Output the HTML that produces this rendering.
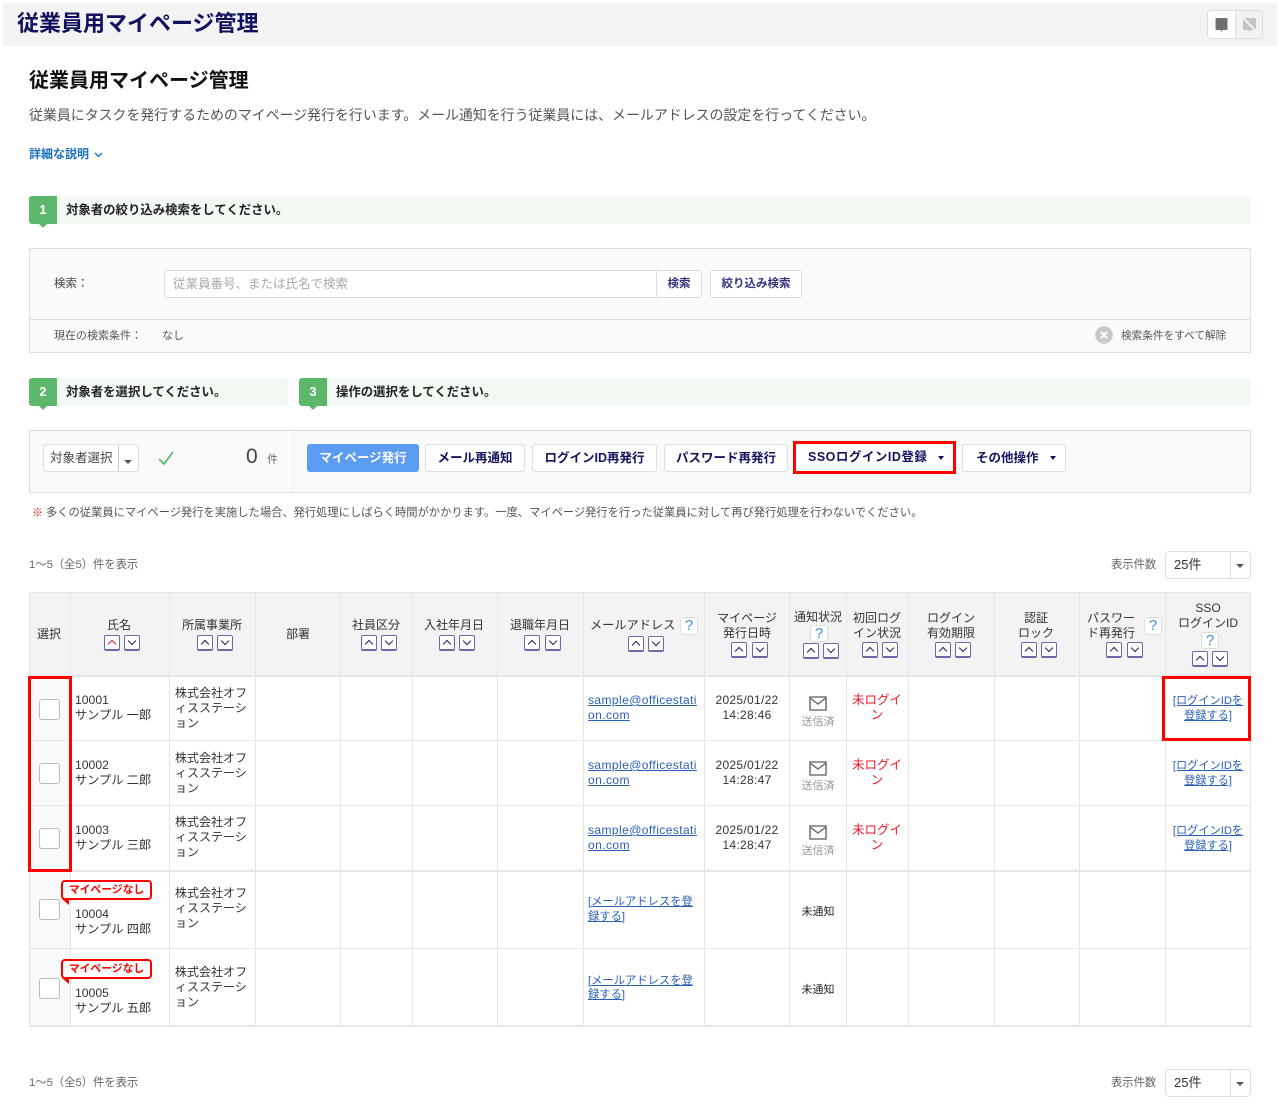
<!DOCTYPE html>
<html lang="ja"><head><meta charset="utf-8"><title>従業員用マイページ管理</title>
<style>
html,body{margin:0;padding:0;background:#fff}
body{position:relative;width:1280px;height:1118px;overflow:hidden;font-family:"Liberation Sans","Noto Sans CJK JP",sans-serif;color:#333;font-size:12px;filter:blur(.3px)}
.t{position:absolute;white-space:nowrap;line-height:16px;height:16px}
.c{transform:translateX(-50%)}
.b{position:absolute;box-sizing:border-box}
.btn{position:absolute;box-sizing:border-box;height:28px;top:444px;background:#fff;border:1px solid #ddd;border-radius:3px;color:#14145f;font-weight:bold;font-size:12.5px;line-height:27px;text-align:center;white-space:nowrap}
.s{position:absolute;box-sizing:border-box;width:16px;height:16px;border:1px solid #6a6aa8;border-bottom-width:2px;border-radius:2px;background:#fff}
.s:after{content:"";position:absolute;left:3.5px;width:6px;height:6px;box-sizing:border-box;border:solid #1d1d6b;border-width:1.5px 0 0 1.5px;transform:rotate(45deg);top:4.5px}
.d:after{transform:rotate(225deg);top:1.5px}
.r:after{border-color:#e8182c}
.q{position:absolute;box-sizing:border-box;width:18px;height:18px;background:#fff;border:1px solid #ddd;border-radius:3px;color:#3c8fe8;font-size:15px;line-height:16px;text-align:center}
.h{font-size:12px;color:#333}
.v{position:absolute;width:1px;top:592px;height:434px;background:#e6e6e6}
.l{position:absolute;left:29px;width:1222px;height:1px;background:#e6e6e6}
.cb{position:absolute;box-sizing:border-box;left:39px;width:21px;height:21px;background:#fff;border:1px solid #bbb;border-radius:3px}
a{color:#2b5fb8;text-decoration:underline;font-size:11.2px}
a.e{font-size:12px;letter-spacing:.42px}
a.m{font-size:11.3px}
.dt{letter-spacing:.3px}
.n{font-size:12.2px}
.red{color:#f01828;font-size:12.5px}
.tag{position:absolute;box-sizing:border-box;left:61px;width:91px;height:20px;border:2px solid #f00;border-radius:4px;background:#fff;color:#f00;font-size:10.8px;font-weight:bold;line-height:17px;text-align:center;white-space:nowrap}
.tail{position:absolute;left:62px;width:0;height:0;border-top:6px solid #f00;border-left:7px solid transparent}
.step{position:absolute;height:28px;background:#f3f9f3;border-radius:3px}
.badge{position:absolute;box-sizing:border-box;width:28px;height:28px;background:#5cb76b;border-radius:3px 0 0 3px;color:#fff;font-weight:bold;font-size:13px;line-height:28px;text-align:center}
.badge:after{content:"";position:absolute;left:10px;top:28px;border-top:4px solid #5cb76b;border-left:4px solid transparent;border-right:4px solid transparent}
.st{font-weight:bold;font-size:12.4px;color:#222}
.sel{position:absolute;box-sizing:border-box;background:#fff;border:1px solid #ddd;border-radius:4px}
.car{position:absolute;border-top:4px solid #555;border-left:4px solid transparent;border-right:4px solid transparent}
.sm{font-size:11.3px;color:#666}
</style></head><body>

<div class="b" style="left:3px;top:3px;width:1274px;height:43px;background:#f3f3f3"></div>
<div class="t" style="left:17px;top:12px;height:24px;line-height:24px;font-size:22px;font-weight:bold;color:#10105f">従業員用マイページ管理</div>
<div class="b" style="left:1207px;top:10px;width:56px;height:29px;background:#fff;border:1px solid #ddd;border-radius:4px"></div>
<div class="b" style="left:1235px;top:11px;width:27px;height:27px;background:#f3f3f3;border-left:1px solid #ddd;border-radius:0 3px 3px 0"></div>
<svg class="b" style="left:1214px;top:17px" width="15" height="16" viewBox="0 0 15 16"><path d="M2.5 1h10a1 1 0 0 1 1 1v10a1 1 0 0 1-1 1H8.500L7.500 15 6.500 13h-4a1 1 0 0 1-1-1V2a1 1 0 0 1 1-1z" fill="#6f6f6f"/></svg>
<svg class="b" style="left:1242px;top:17px" width="15" height="16" viewBox="0 0 15 16"><path d="M2 1h11a1 1 0 0 1 1 1v10a1 1 0 0 1-1 1H8.500L7.500 15 6.500 13H2a1 1 0 0 1-1-1V2a1 1 0 0 1 1-1z" fill="#c4c4c4"/><path d="M1 1l13 13" stroke="#f3f3f3" stroke-width="2"/></svg>

<div class="t" style="left:29px;top:69px;height:24px;line-height:24px;font-size:20px;font-weight:bold;color:#111">従業員用マイページ管理</div>
<div class="t" style="left:29px;top:107px;font-size:13.93px;color:#555">従業員にタスクを発行するためのマイページ発行を行います。メール通知を行う従業員には、メールアドレスの設定を行ってください。</div>
<div class="t" style="left:29px;top:146px;font-size:12px;font-weight:bold;color:#1a6fc0">詳細な説明</div>
<svg class="b" style="left:94px;top:152px" width="9" height="6" viewBox="0 0 9 6"><path d="M1 1l3.500 3.500L8 1" fill="none" stroke="#1a6fc0" stroke-width="1.300"/></svg>

<div class="step" style="left:29px;top:196px;width:1222px"></div>
<div class="badge" style="left:29px;top:196px">1</div>
<div class="t st" style="left:66px;top:202px">対象者の絞り込み検索をしてください。</div>

<div class="b" style="left:29px;top:248px;width:1222px;height:105px;background:#fafafa;border:1px solid #ddd"></div>
<div class="b" style="left:29px;top:319px;width:1222px;height:1px;background:#ddd"></div>
<div class="t" style="left:54px;top:276px;font-size:11.500px;color:#444">検索：</div>
<div class="b" style="left:164px;top:270px;width:493px;height:28px;background:#fff;border:1px solid #ddd;border-radius:3px 0 0 3px"></div>
<div class="t" style="left:173px;top:276px;font-size:12.500px;color:#aaa">従業員番号、または氏名で検索</div>
<div class="btn" style="left:656px;top:270px;width:46px;font-size:11.500px;border-radius:0 3px 3px 0;color:#35357f">検索</div>
<div class="btn" style="left:710px;top:270px;width:92px;font-size:11.500px;color:#35357f">絞り込み検索</div>
<div class="t" style="left:54px;top:328px;font-size:11px;color:#555">現在の検索条件：</div>
<div class="t" style="left:162px;top:328px;font-size:11px;color:#555">なし</div>
<svg class="b" style="left:1095px;top:326px" width="18" height="18" viewBox="0 0 18 18"><circle cx="9" cy="9" r="8.800" fill="#c8c8c8"/><path d="M5.800 5.800l6.400 6.400M12.200 5.800l-6.400 6.400" stroke="#fff" stroke-width="1.800"/></svg>
<div class="t" style="left:1121px;top:328px;font-size:10.650px;color:#555">検索条件をすべて解除</div>

<div class="step" style="left:29px;top:378px;width:259px"></div>
<div class="badge" style="left:29px;top:378px">2</div>
<div class="t st" style="left:66px;top:384px">対象者を選択してください。</div>
<div class="step" style="left:299px;top:378px;width:952px"></div>
<div class="badge" style="left:299px;top:378px">3</div>
<div class="t st" style="left:336px;top:384px">操作の選択をしてください。</div>

<div class="b" style="left:29px;top:430px;width:1222px;height:63px;background:#fafafa;border:1px solid #ddd"></div>
<div class="b" style="left:292px;top:431px;width:1px;height:61px;background:#eee"></div>
<div class="sel" style="left:43px;top:444px;width:96px;height:28px"></div>
<div class="b" style="left:118px;top:445px;width:1px;height:26px;background:#ccc"></div>
<div class="t" style="left:50px;top:450px;font-size:12.500px;color:#444">対象者選択</div>
<div class="car" style="left:124px;top:460px"></div>
<svg class="b" style="left:158px;top:451px" width="16" height="15" viewBox="0 0 16 15"><path d="M1 8l5 5L15 1" fill="none" stroke="#5cb76b" stroke-width="1.800"/></svg>
<div class="t" style="left:246px;top:446px;height:22px;line-height:22px;font-size:21px;color:#444">0</div>
<div class="t" style="left:267px;top:452px;font-size:11px;color:#666">件</div>
<div class="btn" style="left:307px;width:112px;background:#5b9cf0;border-color:#5b9cf0;color:#fff">マイページ発行</div>
<div class="btn" style="left:425px;width:100px">メール再通知</div>
<div class="btn" style="left:532px;width:125px">ログインID再発行</div>
<div class="btn" style="left:664px;width:124px">パスワード再発行</div>
<div class="btn" style="left:796px;width:156px;text-align:left;padding-left:12px;border:0;letter-spacing:.5px">SSOログインID登録</div>
<div class="car" style="left:938px;top:456px;border-top-color:#14145f;border-width:4px 3.500px 0"></div>
<div class="btn" style="left:962px;width:104px;text-align:left;padding-left:13px">その他操作</div>
<div class="car" style="left:1050px;top:456px;border-top-color:#14145f;border-width:4px 3.500px 0"></div>
<div class="b" style="left:793px;top:441px;width:163px;height:33px;border:3px solid #f00"></div>

<div class="t" style="left:32px;top:505px;font-size:11px;color:#f00;font-weight:bold">※</div>
<div class="t" style="left:46px;top:505px;font-size:11.28px;color:#555">多くの従業員にマイページ発行を実施した場合、発行処理にしばらく時間がかかります。一度、マイページ発行を行った従業員に対して再び発行処理を行わないでください。</div>

<div class="t sm" style="left:29px;top:557px">1〜5（全5）件を表示</div>
<div class="t sm" style="left:1111px;top:557px">表示件数</div>
<div class="sel" style="left:1165px;top:551px;width:86px;height:28px"></div>
<div class="b" style="left:1230px;top:552px;width:1px;height:26px;background:#ddd"></div>
<div class="t" style="left:1174px;top:557px;font-size:13px;color:#333">25件</div>
<div class="car" style="left:1236px;top:564px"></div>

<!-- table -->
<div class="b" style="left:29px;top:592px;width:1222px;height:84px;background:#f3f3f3"></div>
<div class="b" style="left:29px;top:676px;width:41px;height:350px;background:#f9f9f9"></div>
<div class="l" style="top:592px"></div><div class="l" style="top:675px;height:2px"></div><div class="l" style="top:740px"></div><div class="l" style="top:805px"></div><div class="l" style="top:870px;height:2px"></div><div class="l" style="top:948px"></div><div class="l" style="top:1025px;height:2px"></div>
<div class="v" style="left:29px"></div><div class="v" style="left:70px"></div><div class="v" style="left:169px"></div><div class="v" style="left:255px"></div><div class="v" style="left:340px"></div><div class="v" style="left:412px"></div><div class="v" style="left:497px"></div><div class="v" style="left:583px"></div><div class="v" style="left:704px"></div><div class="v" style="left:789px"></div><div class="v" style="left:846px"></div><div class="v" style="left:908px"></div><div class="v" style="left:994px"></div><div class="v" style="left:1079px"></div><div class="v" style="left:1165px"></div><div class="v" style="left:1250px"></div>

<div class="t c h" style="left:49px;top:626px">選択</div>
<div class="t c h" style="left:119px;top:617px">氏名</div>
<div class="s r" style="left:104px;top:635px"></div><div class="s d" style="left:124px;top:635px"></div>
<div class="t c h" style="left:212px;top:617px">所属事業所</div>
<div class="s" style="left:197px;top:635px"></div><div class="s d" style="left:217px;top:635px"></div>
<div class="t c h" style="left:298px;top:626px">部署</div>
<div class="t c h" style="left:376px;top:617px">社員区分</div>
<div class="s" style="left:361px;top:635px"></div><div class="s d" style="left:381px;top:635px"></div>
<div class="t c h" style="left:454px;top:617px">入社年月日</div>
<div class="s" style="left:439px;top:635px"></div><div class="s d" style="left:459px;top:635px"></div>
<div class="t c h" style="left:540px;top:617px">退職年月日</div>
<div class="s" style="left:524px;top:635px"></div><div class="s d" style="left:545px;top:635px"></div>
<div class="t h" style="left:590px;top:617px;font-size:12.200px">メールアドレス</div>
<div class="q" style="left:680px;top:617px">?</div>
<div class="s" style="left:628px;top:636px"></div><div class="s d" style="left:648px;top:636px"></div>
<div class="t c h" style="left:747px;top:610px">マイページ</div>
<div class="t c h" style="left:747px;top:625px">発行日時</div>
<div class="s" style="left:731px;top:642px"></div><div class="s d" style="left:752px;top:642px"></div>
<div class="t c h" style="left:818px;top:609px">通知状況</div>
<div class="q" style="left:810px;top:625px;height:17px">?</div>
<div class="s" style="left:803px;top:643px"></div><div class="s d" style="left:823px;top:643px"></div>
<div class="t c h" style="left:877px;top:610px">初回ログ</div>
<div class="t c h" style="left:877px;top:625px">イン状況</div>
<div class="s" style="left:862px;top:642px"></div><div class="s d" style="left:882px;top:642px"></div>
<div class="t c h" style="left:951px;top:610px">ログイン</div>
<div class="t c h" style="left:951px;top:625px">有効期限</div>
<div class="s" style="left:935px;top:642px"></div><div class="s d" style="left:955px;top:642px"></div>
<div class="t c h" style="left:1036px;top:610px">認証</div>
<div class="t c h" style="left:1036px;top:625px">ロック</div>
<div class="s" style="left:1021px;top:642px"></div><div class="s d" style="left:1041px;top:642px"></div>
<div class="t h" style="left:1087px;top:610px">パスワー</div>
<div class="t h" style="left:1087px;top:625px">ド再発行</div>
<div class="q" style="left:1144px;top:617px">?</div>
<div class="s" style="left:1106px;top:642px"></div><div class="s d" style="left:1127px;top:642px"></div>
<div class="t c h" style="left:1208px;top:600px">SSO</div>
<div class="t c h" style="left:1208px;top:615px">ログインID</div>
<div class="q" style="left:1201px;top:632px;height:17px">?</div>
<div class="s" style="left:1192px;top:651px"></div><div class="s d" style="left:1212px;top:651px"></div>

<!-- row 1 -->
<div class="cb" style="top:699px"></div>
<div class="t n" style="left:75px;top:692px">10001</div>
<div class="t n" style="left:75px;top:707px">サンプル 一郎</div>
<div class="t" style="left:175px;top:685px">株式会社オフ</div><div class="t" style="left:175px;top:700px">ィスステーシ</div><div class="t" style="left:175px;top:715px">ョン</div>
<div class="t" style="left:588px;top:692px"><a class="e">sample@officestati</a></div><div class="t" style="left:588px;top:707px"><a class="e">on.com</a></div>
<div class="t c dt" style="left:747px;top:692px">2025/01/22</div><div class="t c dt" style="left:747px;top:707px">14:28:46</div>
<svg class="b" style="left:809px;top:696px" width="18" height="15" viewBox="0 0 18 15"><path d="M1 1h16v13H1zM1 2l8 6 8-6" fill="none" stroke="#777" stroke-width="1.600"/></svg>
<div class="t c" style="left:818px;top:714px;font-size:11px;color:#999">送信済</div>
<div class="t c red" style="left:877px;top:692px">未ログイ</div><div class="t c red" style="left:877px;top:707px">ン</div>
<div class="t c" style="left:1208px;top:692px"><a>[ログインIDを</a></div><div class="t c" style="left:1208px;top:707px"><a>登録する]</a></div>

<!-- row 2 -->
<div class="cb" style="top:763px"></div>
<div class="t n" style="left:75px;top:757px">10002</div>
<div class="t n" style="left:75px;top:772px">サンプル 二郎</div>
<div class="t" style="left:175px;top:750px">株式会社オフ</div><div class="t" style="left:175px;top:765px">ィスステーシ</div><div class="t" style="left:175px;top:780px">ョン</div>
<div class="t" style="left:588px;top:757px"><a class="e">sample@officestati</a></div><div class="t" style="left:588px;top:772px"><a class="e">on.com</a></div>
<div class="t c dt" style="left:747px;top:757px">2025/01/22</div><div class="t c dt" style="left:747px;top:772px">14:28:47</div>
<svg class="b" style="left:809px;top:761px" width="18" height="15" viewBox="0 0 18 15"><path d="M1 1h16v13H1zM1 2l8 6 8-6" fill="none" stroke="#777" stroke-width="1.600"/></svg>
<div class="t c" style="left:818px;top:778px;font-size:11px;color:#999">送信済</div>
<div class="t c red" style="left:877px;top:757px">未ログイ</div><div class="t c red" style="left:877px;top:772px">ン</div>
<div class="t c" style="left:1208px;top:757px"><a>[ログインIDを</a></div><div class="t c" style="left:1208px;top:772px"><a>登録する]</a></div>

<!-- row 3 -->
<div class="cb" style="top:828px"></div>
<div class="t n" style="left:75px;top:822px">10003</div>
<div class="t n" style="left:75px;top:837px">サンプル 三郎</div>
<div class="t" style="left:175px;top:814px">株式会社オフ</div><div class="t" style="left:175px;top:829px">ィスステーシ</div><div class="t" style="left:175px;top:844px">ョン</div>
<div class="t" style="left:588px;top:822px"><a class="e">sample@officestati</a></div><div class="t" style="left:588px;top:837px"><a class="e">on.com</a></div>
<div class="t c dt" style="left:747px;top:822px">2025/01/22</div><div class="t c dt" style="left:747px;top:837px">14:28:47</div>
<svg class="b" style="left:809px;top:825px" width="18" height="15" viewBox="0 0 18 15"><path d="M1 1h16v13H1zM1 2l8 6 8-6" fill="none" stroke="#777" stroke-width="1.600"/></svg>
<div class="t c" style="left:818px;top:843px;font-size:11px;color:#999">送信済</div>
<div class="t c red" style="left:877px;top:822px">未ログイ</div><div class="t c red" style="left:877px;top:837px">ン</div>
<div class="t c" style="left:1208px;top:822px"><a>[ログインIDを</a></div><div class="t c" style="left:1208px;top:837px"><a>登録する]</a></div>

<!-- row 4 -->
<div class="cb" style="top:899px"></div>
<div class="tag" style="top:880px">マイページなし</div><div class="tail" style="top:899px"></div>
<div class="t n" style="left:75px;top:906px">10004</div>
<div class="t n" style="left:75px;top:921px">サンプル 四郎</div>
<div class="t" style="left:175px;top:885px">株式会社オフ</div><div class="t" style="left:175px;top:900px">ィスステーシ</div><div class="t" style="left:175px;top:915px">ョン</div>
<div class="t" style="left:588px;top:893px"><a class="m">[メールアドレスを登</a></div><div class="t" style="left:588px;top:908px"><a class="m">録する]</a></div>
<div class="t c" style="left:818px;top:904px;font-size:11px;color:#222">未通知</div>

<!-- row 5 -->
<div class="cb" style="top:978px"></div>
<div class="tag" style="top:959px">マイページなし</div><div class="tail" style="top:978px"></div>
<div class="t n" style="left:75px;top:985px">10005</div>
<div class="t n" style="left:75px;top:1000px">サンプル 五郎</div>
<div class="t" style="left:175px;top:964px">株式会社オフ</div><div class="t" style="left:175px;top:979px">ィスステーシ</div><div class="t" style="left:175px;top:994px">ョン</div>
<div class="t" style="left:588px;top:972px"><a class="m">[メールアドレスを登</a></div><div class="t" style="left:588px;top:986px"><a class="m">録する]</a></div>
<div class="t c" style="left:818px;top:982px;font-size:11px;color:#222">未通知</div>

<!-- highlight boxes -->
<div class="b" style="left:28px;top:676px;width:44px;height:196px;border:3px solid #f00"></div>
<div class="b" style="left:1162px;top:676px;width:89px;height:65px;border:3px solid #f00"></div>

<div class="t sm" style="left:29px;top:1075px">1〜5（全5）件を表示</div>
<div class="t sm" style="left:1111px;top:1075px">表示件数</div>
<div class="sel" style="left:1165px;top:1069px;width:86px;height:28px"></div>
<div class="b" style="left:1230px;top:1070px;width:1px;height:26px;background:#ddd"></div>
<div class="t" style="left:1174px;top:1075px;font-size:13px;color:#333">25件</div>
<div class="car" style="left:1236px;top:1082px"></div>
</body></html>
